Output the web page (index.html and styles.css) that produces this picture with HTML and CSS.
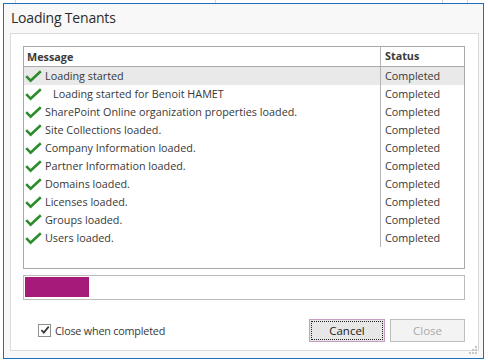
FILE: index.html
```html
<!DOCTYPE html>
<html lang="en">
  <head>
    <meta charset="UTF-8" />
    <title>Loading Tenants</title>
    <link rel="stylesheet" href="styles.css">
  </head>
  <body>
    <div class="window">
      <div class="window-title">Loading Tenants</div>
      <div class="panel">
        <div class="log">
          <div class="log-row log-head">
            <div class="col-msg">Message</div>
            <div class="col-status">Status</div>
          </div>
          <div class="log-row selected">
            <div class="col-msg"><svg class="check" viewBox="0 0 17 13"><path d="M1.2 6.2 L5.6 10.6 L15.8 1.2"/></svg>Loading started</div>
            <div class="col-status">Completed</div>
          </div>
          <div class="log-row">
            <div class="col-msg"><svg class="check" viewBox="0 0 17 13"><path d="M1.2 6.2 L5.6 10.6 L15.8 1.2"/></svg><span class="indent">Loading started for Benoit HAMET</span></div>
            <div class="col-status">Completed</div>
          </div>
          <div class="log-row">
            <div class="col-msg"><svg class="check" viewBox="0 0 17 13"><path d="M1.2 6.2 L5.6 10.6 L15.8 1.2"/></svg>SharePoint Online organization properties loaded.</div>
            <div class="col-status">Completed</div>
          </div>
          <div class="log-row">
            <div class="col-msg"><svg class="check" viewBox="0 0 17 13"><path d="M1.2 6.2 L5.6 10.6 L15.8 1.2"/></svg>Site Collections loaded.</div>
            <div class="col-status">Completed</div>
          </div>
          <div class="log-row">
            <div class="col-msg"><svg class="check" viewBox="0 0 17 13"><path d="M1.2 6.2 L5.6 10.6 L15.8 1.2"/></svg>Company Information loaded.</div>
            <div class="col-status">Completed</div>
          </div>
          <div class="log-row">
            <div class="col-msg"><svg class="check" viewBox="0 0 17 13"><path d="M1.2 6.2 L5.6 10.6 L15.8 1.2"/></svg>Partner Information loaded.</div>
            <div class="col-status">Completed</div>
          </div>
          <div class="log-row">
            <div class="col-msg"><svg class="check" viewBox="0 0 17 13"><path d="M1.2 6.2 L5.6 10.6 L15.8 1.2"/></svg>Domains loaded.</div>
            <div class="col-status">Completed</div>
          </div>
          <div class="log-row">
            <div class="col-msg"><svg class="check" viewBox="0 0 17 13"><path d="M1.2 6.2 L5.6 10.6 L15.8 1.2"/></svg>Licenses loaded.</div>
            <div class="col-status">Completed</div>
          </div>
          <div class="log-row">
            <div class="col-msg"><svg class="check" viewBox="0 0 17 13"><path d="M1.2 6.2 L5.6 10.6 L15.8 1.2"/></svg>Groups loaded.</div>
            <div class="col-status">Completed</div>
          </div>
          <div class="log-row">
            <div class="col-msg"><svg class="check" viewBox="0 0 17 13"><path d="M1.2 6.2 L5.6 10.6 L15.8 1.2"/></svg>Users loaded.</div>
            <div class="col-status">Completed</div>
          </div>
        </div>

        <div class="progress">
          <div class="progress-bar" style="width: 64px"></div>
        </div>

        <div class="footer">
          <label class="close-check">
            <span class="checkbox">
              <svg viewBox="0 0 11 11"><path d="M1.5 5.5 L4.2 8.4 L9.6 1.8"/></svg>
            </span>
            Close when completed
          </label>
          <span class="fill"></span>
          <button class="btn btn-focus"><span>Cancel</span></button>
          <button class="btn" disabled><span>Close</span></button>
        </div>
      </div>
      <svg class="grip" viewBox="0 0 9 9">
        <rect x="6" y="0" width="2" height="2"/>
        <rect x="3" y="3" width="2" height="2"/>
        <rect x="6" y="3" width="2" height="2"/>
        <rect x="0" y="6" width="2" height="2"/>
        <rect x="3" y="6" width="2" height="2"/>
        <rect x="6" y="6" width="2" height="2"/>
      </svg>
    </div>
  </body>
</html>
```

FILE: styles.css
```css
* {
  box-sizing: border-box;
}

body {
  margin: 0;
  width: 488px;
  height: 363px;
  overflow: hidden;
  font-family: "Open Sans", "Noto Sans", sans-serif;
  font-size: 10.8px;
  color: #383838;
  /* bits of the app window behind the dialog */
  background:
    linear-gradient(#d4d4d4, #d4d4d4) 15px 0 / 1px 3px no-repeat,
    linear-gradient(#d4d4d4, #d4d4d4) 215px 0 / 1px 3px no-repeat,
    linear-gradient(#d4d4d4, #d4d4d4) 442px 0 / 1px 3px no-repeat,
    linear-gradient(#d4d4d4, #d4d4d4) 467px 0 / 1px 3px no-repeat,
    #ffffff;
  padding: 3px 0 0 3px;
}

.window {
  position: relative;
  width: 481px;
  height: 356px;
  border: 1px solid #1c6fc0;
  background: #f8f8f8;
  display: flex;
  flex-direction: column;
  padding: 0 4px 7px 6px;
}

.window-title {
  height: 29px;
  padding: 3px 0 0 1px;
  font-size: 14px;
  letter-spacing: -0.2px;
  color: #2b2b2b;
  line-height: 22px;
}

.panel {
  flex: 1;
  background: #ffffff;
  border: 1px solid #dadada;
  padding: 12px 13px 0 12px;
  display: flex;
  flex-direction: column;
}

/* message list */
.log {
  height: 223px;
  border: 1px solid #a9a9a9;
  display: flex;
  flex-direction: column;
}

.log-row {
  display: flex;
  height: 18px;
  line-height: 18px;
  white-space: nowrap;
}
.log-row.selected {
  background: #e9e9e9;
}

.log-head {
  height: 20px;
  line-height: 18px;
  border-bottom: 1px solid #a9a9a9;
  font-weight: bold;
  color: #3a3a3a;
}
.log-head .col-msg {
  padding-left: 3px;
}

.col-msg {
  width: 357px;
  display: flex;
  align-items: center;
  padding-left: 1px;
  border-right: 1px solid #b4b4b4;
}
.col-status {
  flex: 1;
  padding-left: 4px;
}

.check {
  width: 17px;
  height: 13px;
  margin-right: 3px;
  flex: none;
}
.check path {
  fill: none;
  stroke: #2c8c2c;
  stroke-width: 2.6;
  stroke-linejoin: miter;
}

.indent {
  padding-left: 8px;
}

/* progress */
.progress {
  margin-top: 6px;
  height: 25px;
  border: 1px solid #bcbcbc;
  padding: 1px;
}
.progress-bar {
  height: 20px;
  background: #a61b7a;
}

/* buttons */
.footer {
  display: flex;
  align-items: center;
  margin-top: 18px;
  height: 24px;
  gap: 5px;
}

.close-check {
  display: flex;
  align-items: center;
  gap: 4px;
  margin-left: 15px;
  letter-spacing: -0.2px;
}
.checkbox {
  width: 13px;
  height: 13px;
  border: 1px solid #8e8e8e;
  background: #ffffff;
  display: flex;
  align-items: center;
  justify-content: center;
}
.checkbox svg {
  width: 10px;
  height: 10px;
}
.checkbox path {
  fill: none;
  stroke: #333333;
  stroke-width: 1.8;
}

.fill {
  flex: 1;
}

.btn {
  width: 75px;
  height: 23px;
  padding: 1px;
  margin: 0;
  border: 1px solid #bdbdbd;
  background: #f3f3f3;
  color: #a9a9a9;
  font-family: inherit;
  font-size: 11.5px;
}
.btn span {
  display: flex;
  align-items: center;
  justify-content: center;
  height: 100%;
  border: 1px solid transparent;
}
.btn-focus {
  width: 76px;
  border-color: #c59cc2;
  background: #e7e7e7;
  color: #222222;
}
.btn-focus span {
  border: 1px dotted #222222;
}

.grip {
  position: absolute;
  right: 5px;
  bottom: 3px;
  width: 9px;
  height: 9px;
}
.grip rect {
  fill: #c6c6c6;
}
```
